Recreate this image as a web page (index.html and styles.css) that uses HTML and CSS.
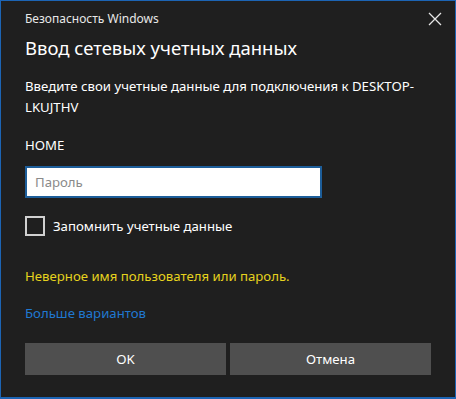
FILE: index.html
```html
<!DOCTYPE html>
<html lang="ru">
<head>
	<meta charset="UTF-8">
	<title>Безопасность Windows</title>
	<link rel="stylesheet" href="styles.css">
</head>
<body>
	<div class="dialog">
		<div class="titlebar">
			<span class="caption">Безопасность Windows</span>
			<svg class="close" width="14" height="14" viewBox="0 0 14 14">
				<path d="M1 1L13 13M13 1L1 13" stroke="#e6e6e6" stroke-width="1.3" fill="none"/>
			</svg>
		</div>
		<h1 class="heading">Ввод сетевых учетных данных</h1>
		<p class="desc">Введите свои учетные данные для подключения к DESKTOP-LKUJTHV</p>
		<p class="user">HOME</p>
		<input class="pass" type="password" placeholder="Пароль">
		<label class="remember"><span class="box"></span>Запомнить учетные данные</label>
		<p class="error">Неверное имя пользователя или пароль.</p>
		<a class="more" href="#">Больше вариантов</a>
		<div class="buttons">
			<button class="btn">OK</button>
			<button class="btn">Отмена</button>
		</div>
	</div>
</body>
</html>
```

FILE: styles.css
```css
html, body {
	margin: 0;
	background: #1f1f1f;
}
.dialog {
	box-sizing: border-box;
	width: 456px;
	height: 399px;
	border: 1px solid #1c64b4;
	border-bottom-width: 2px;
	background: #1f1f1f;
	color: #ffffff;
	font-family: "Noto Sans", sans-serif;
	padding: 0 24px;
}
.titlebar {
	display: flex;
	justify-content: space-between;
	align-items: center;
	height: 30px;
	margin-top: 2px;
}
.caption {
	font-size: 12px;
	color: #e8e8e8;
}
.close {
	margin-right: -11px;
	margin-top: 2px;
}
.heading {
	margin: 0;
	font-size: 18.5px;
	font-weight: 400;
	line-height: 30px;
}
.desc {
	margin: 13px 0 0;
	font-size: 13.2px;
	line-height: 21px;
	width: 400px;
}
.user {
	margin: 16px 0 0;
	font-size: 13.2px;
	line-height: 22px;
}
.pass {
	display: block;
	box-sizing: border-box;
	width: 297px;
	height: 32px;
	margin-top: 10px;
	border: 2px solid #1d5e9a;
	padding: 0 8px;
	font-family: "Noto Sans", sans-serif;
	font-size: 13.2px;
	outline: none;
}
.pass::placeholder {
	color: #8a8a8a;
}
.remember {
	display: flex;
	align-items: center;
	gap: 8px;
	margin-top: 18px;
	font-size: 13.2px;
	line-height: 20px;
}
.box {
	box-sizing: border-box;
	width: 20px;
	height: 20px;
	border: 2px solid #d0d0d0;
}
.error {
	margin: 29px 0 0;
	font-size: 13.2px;
	line-height: 22px;
	color: #e6d21e;
}
.more {
	display: block;
	margin-top: 15px;
	font-size: 13.2px;
	line-height: 22px;
	color: #1f78d1;
	text-decoration: none;
}
.buttons {
	display: flex;
	gap: 4px;
	margin-top: 19px;
	width: 406px;
}
.btn {
	flex: 1;
	height: 32px;
	border: none;
	background: #4f4f4f;
	color: #ffffff;
	font-family: "Noto Sans", sans-serif;
	font-size: 13.2px;
}
```
